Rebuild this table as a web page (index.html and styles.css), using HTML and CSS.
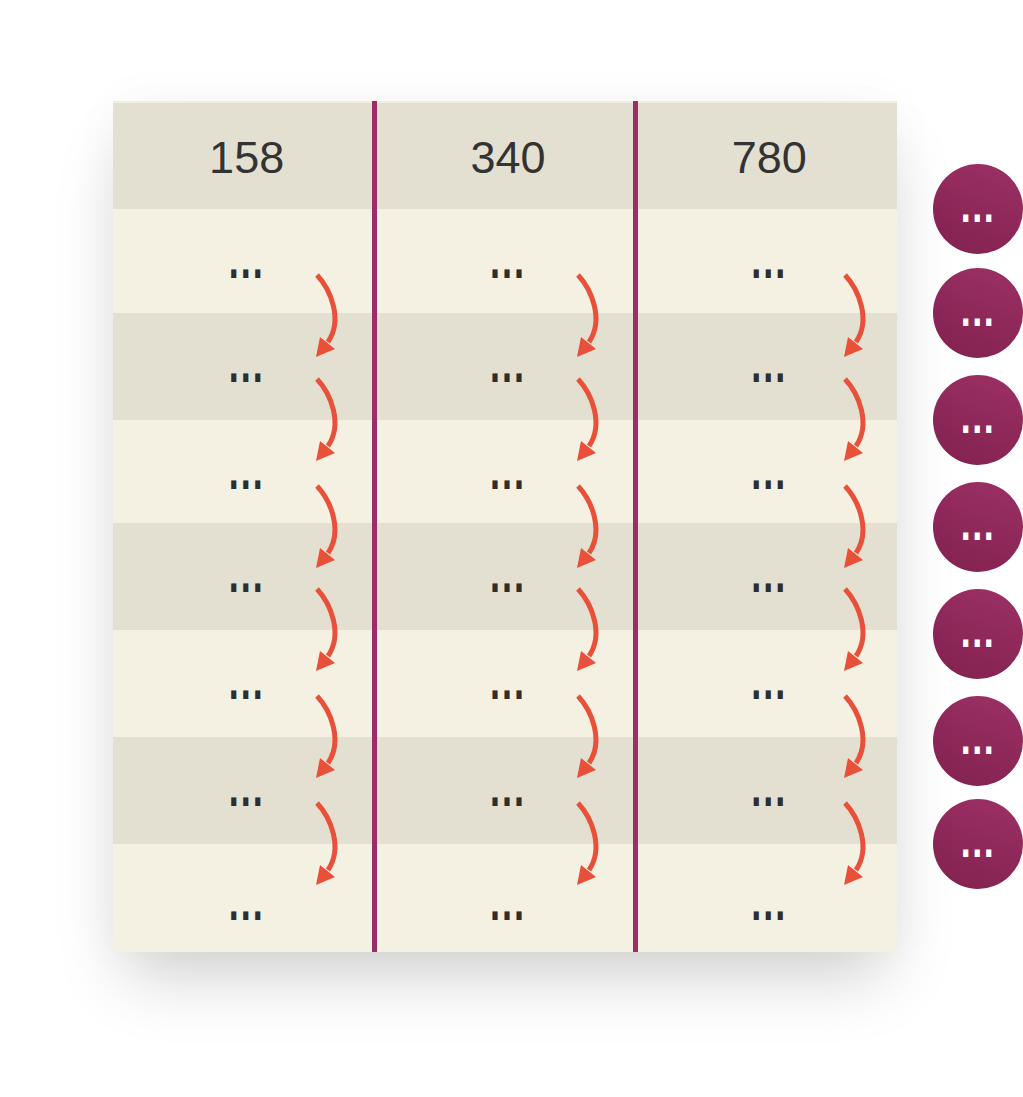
FILE: index.html
```html
<!DOCTYPE html>
<html lang="en">
<head>
<meta charset="utf-8">
<title>Table</title>
<link rel="stylesheet" href="styles.css">
</head>
<body>
<div class="page">
  <div class="table">
    <div class="divider d1"></div>
    <div class="divider d2"></div>

    <div class="row head h108">
      <div class="cell"><span class="num">158</span></div>
      <div class="cell"><span class="num">340</span></div>
      <div class="cell"><span class="num">780</span></div>
    </div>

    <div class="row light h104">
      <div class="cell"><span class="dots">...</span><svg class="arrow" viewBox="0 0 26 88"><path d="M4 3 C18 18, 30 48, 15 70"/><polygon points="3,85 7,65 22,77"/></svg></div>
      <div class="cell"><span class="dots">...</span><svg class="arrow" viewBox="0 0 26 88"><path d="M4 3 C18 18, 30 48, 15 70"/><polygon points="3,85 7,65 22,77"/></svg></div>
      <div class="cell c3"><span class="dots">...</span><svg class="arrow" viewBox="0 0 26 88"><path d="M4 3 C18 18, 30 48, 15 70"/><polygon points="3,85 7,65 22,77"/></svg></div>
    </div>

    <div class="row dark h107">
      <div class="cell"><span class="dots">...</span><svg class="arrow" viewBox="0 0 26 88"><path d="M4 3 C18 18, 30 48, 15 70"/><polygon points="3,85 7,65 22,77"/></svg></div>
      <div class="cell"><span class="dots">...</span><svg class="arrow" viewBox="0 0 26 88"><path d="M4 3 C18 18, 30 48, 15 70"/><polygon points="3,85 7,65 22,77"/></svg></div>
      <div class="cell c3"><span class="dots">...</span><svg class="arrow" viewBox="0 0 26 88"><path d="M4 3 C18 18, 30 48, 15 70"/><polygon points="3,85 7,65 22,77"/></svg></div>
    </div>

    <div class="row light h103">
      <div class="cell"><span class="dots">...</span><svg class="arrow" viewBox="0 0 26 88"><path d="M4 3 C18 18, 30 48, 15 70"/><polygon points="3,85 7,65 22,77"/></svg></div>
      <div class="cell"><span class="dots">...</span><svg class="arrow" viewBox="0 0 26 88"><path d="M4 3 C18 18, 30 48, 15 70"/><polygon points="3,85 7,65 22,77"/></svg></div>
      <div class="cell c3"><span class="dots">...</span><svg class="arrow" viewBox="0 0 26 88"><path d="M4 3 C18 18, 30 48, 15 70"/><polygon points="3,85 7,65 22,77"/></svg></div>
    </div>

    <div class="row dark h107">
      <div class="cell"><span class="dots">...</span><svg class="arrow" viewBox="0 0 26 88"><path d="M4 3 C18 18, 30 48, 15 70"/><polygon points="3,85 7,65 22,77"/></svg></div>
      <div class="cell"><span class="dots">...</span><svg class="arrow" viewBox="0 0 26 88"><path d="M4 3 C18 18, 30 48, 15 70"/><polygon points="3,85 7,65 22,77"/></svg></div>
      <div class="cell c3"><span class="dots">...</span><svg class="arrow" viewBox="0 0 26 88"><path d="M4 3 C18 18, 30 48, 15 70"/><polygon points="3,85 7,65 22,77"/></svg></div>
    </div>

    <div class="row light h107">
      <div class="cell"><span class="dots">...</span><svg class="arrow" viewBox="0 0 26 88"><path d="M4 3 C18 18, 30 48, 15 70"/><polygon points="3,85 7,65 22,77"/></svg></div>
      <div class="cell"><span class="dots">...</span><svg class="arrow" viewBox="0 0 26 88"><path d="M4 3 C18 18, 30 48, 15 70"/><polygon points="3,85 7,65 22,77"/></svg></div>
      <div class="cell c3"><span class="dots">...</span><svg class="arrow" viewBox="0 0 26 88"><path d="M4 3 C18 18, 30 48, 15 70"/><polygon points="3,85 7,65 22,77"/></svg></div>
    </div>

    <div class="row dark h107">
      <div class="cell"><span class="dots">...</span><svg class="arrow" viewBox="0 0 26 88"><path d="M4 3 C18 18, 30 48, 15 70"/><polygon points="3,85 7,65 22,77"/></svg></div>
      <div class="cell"><span class="dots">...</span><svg class="arrow" viewBox="0 0 26 88"><path d="M4 3 C18 18, 30 48, 15 70"/><polygon points="3,85 7,65 22,77"/></svg></div>
      <div class="cell c3"><span class="dots">...</span><svg class="arrow" viewBox="0 0 26 88"><path d="M4 3 C18 18, 30 48, 15 70"/><polygon points="3,85 7,65 22,77"/></svg></div>
    </div>

    <div class="row light h108 last">
      <div class="cell"><span class="dots">...</span></div>
      <div class="cell"><span class="dots">...</span></div>
      <div class="cell c3"><span class="dots">...</span></div>
    </div>
  </div>

  <div class="bubbles">
    <div class="bubble"><span class="bdots">...</span></div>
    <div class="bubble second"><span class="bdots">...</span></div>
    <div class="bubble"><span class="bdots">...</span></div>
    <div class="bubble"><span class="bdots">...</span></div>
    <div class="bubble"><span class="bdots">...</span></div>
    <div class="bubble"><span class="bdots">...</span></div>
    <div class="bubble final"><span class="bdots">...</span></div>
  </div>
</div>
</body>
</html>
```

FILE: styles.css
```css
html, body {
  margin: 0;
  padding: 0;
  background: #ffffff;
}

body {
  font-family: "Liberation Sans", Arial, sans-serif;
  color: #333333;
  min-height: 1097px;
}

.page {
  display: flex;
  align-items: flex-start;
  box-sizing: border-box;
  min-height: 1097px;
  padding: 101px 0 0 113px;
}

.table {
  position: relative;
  width: 784px;
  display: flex;
  flex-direction: column;
  box-shadow: 0 36px 64px -12px rgba(0, 0, 0, 0.18), 0 0 50px rgba(0, 0, 0, 0.03);
}

.row {
  display: grid;
  grid-template-columns: repeat(3, 1fr);
}

.h103 { height: 103px; }
.h104 { height: 104px; }
.h107 { height: 107px; }
.h108 { height: 108px; }

.head {
  background: #e4e0d1;
  box-sizing: border-box;
  border-top: 2px solid #f3efe0;
}

.light { background: #f5f1e2; }
.dark { background: #e4e0d1; }

.cell {
  position: relative;
  display: flex;
  justify-content: center;
  align-items: flex-start;
  padding: 38px 0 0 6px;
}

.head .cell {
  align-items: center;
  padding: 4px 0 0 6px;
}

.last .cell {
  padding-top: 45px;
}

.num {
  font-size: 45px;
  line-height: 50px;
  color: #333333;
}

.dots {
  display: inline-block;
  font-size: 36px;
  line-height: 36px;
  height: 36px;
  font-weight: bold;
  letter-spacing: 2px;
  color: #2e2e2e;
  transform: scaleY(1.6);
  transform-origin: 50% 28px;
}

.arrow {
  position: absolute;
  left: 200px;
  top: 63px;
  width: 26px;
  height: 88px;
  z-index: 1;
  overflow: visible;
}

.c3 .arrow {
  left: 205px;
}

.arrow path {
  fill: none;
  stroke: #e9503a;
  stroke-width: 5;
}

.arrow polygon {
  fill: #e9503a;
}

.divider {
  position: absolute;
  top: 0;
  bottom: 0;
  width: 5px;
  background: #9d2d66;
  z-index: 2;
}

.d1 { left: calc(33.333% - 2.5px); }
.d2 { left: calc(66.667% - 2.5px); }

.bubbles {
  display: flex;
  flex-direction: column;
  gap: 17px;
  margin-left: 36px;
  padding-top: 63px;
}

.bubble {
  width: 90px;
  height: 90px;
  border-radius: 50%;
  background: linear-gradient(200deg, #9c3065 0%, #8e2859 55%, #82224f 100%);
  display: flex;
  justify-content: center;
  align-items: center;
}

.bubble.second { margin-top: -3px; }
.bubble.final { margin-top: -4px; }

.bdots {
  display: inline-block;
  font-size: 36px;
  line-height: 36px;
  height: 36px;
  font-weight: bold;
  letter-spacing: 1.5px;
  color: #ffffff;
  transform: scaleY(1.4);
  transform-origin: 50% 28px;
}
```
